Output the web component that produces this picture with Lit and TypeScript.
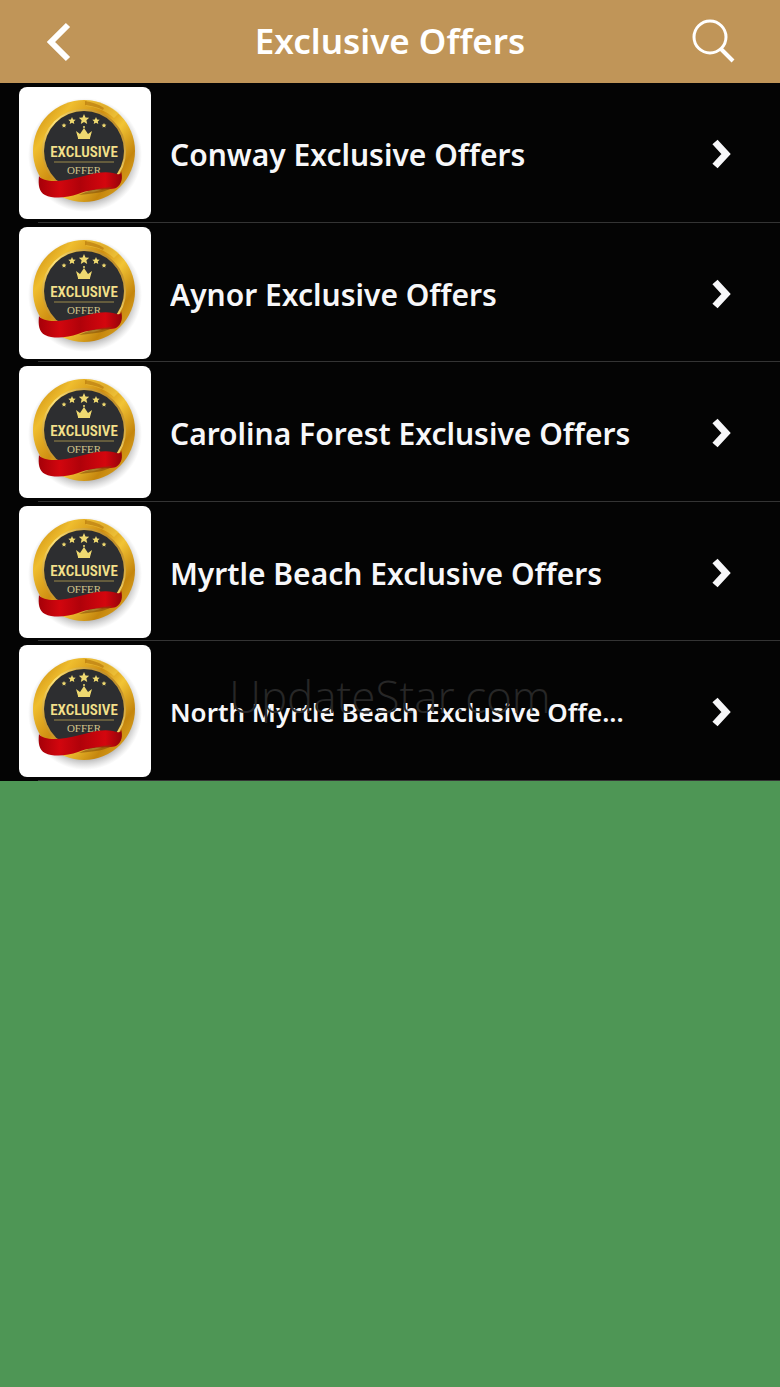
import { LitElement, html, css } from "lit";
import { customElement, property } from "lit/decorators.js";

@customElement("offer-badge")
class OfferBadge extends LitElement {
  static styles = css`
    :host {
      display: block;
      width: 132px;
      height: 132px;
      border-radius: 8px;
      background: #fff;
      overflow: hidden;
    }
    svg {
      display: block;
      width: 100%;
      height: 100%;
    }
    .word {
      font: 600 15px "Liberation Sans Narrow", "Roboto Condensed", "DejaVu Sans Condensed", sans-serif;
    }
    .sub {
      font: 400 11px "Liberation Serif", serif;
    }
  `;

  render() {
    return html`
      <svg viewBox="0 0 132 132" role="img" aria-label="Exclusive offer">
        <defs>
          <linearGradient id="gold" x1="0" y1="0.1" x2="1" y2="0.9">
            <stop offset="0" stop-color="#c98a10" />
            <stop offset="0.2" stop-color="#efbd2e" />
            <stop offset="0.42" stop-color="#cf8f12" />
            <stop offset="0.6" stop-color="#f2c435" />
            <stop offset="0.8" stop-color="#c5860d" />
            <stop offset="1" stop-color="#e3ad27" />
          </linearGradient>
          <linearGradient id="rim" x1="1" y1="0" x2="0" y2="1">
            <stop offset="0" stop-color="#a96c08" />
            <stop offset="0.5" stop-color="#fbe27a" />
            <stop offset="1" stop-color="#b5780a" />
          </linearGradient>
          <linearGradient id="red" x1="0" y1="0" x2="1" y2="0">
            <stop offset="0" stop-color="#a50008" />
            <stop offset="0.25" stop-color="#d2060e" />
            <stop offset="0.5" stop-color="#b0020a" />
            <stop offset="0.8" stop-color="#d4060e" />
            <stop offset="1" stop-color="#94040a" />
          </linearGradient>
          <radialGradient id="shade">
            <stop offset="0.8" stop-color="#777" stop-opacity="0.55" />
            <stop offset="1" stop-color="#999" stop-opacity="0" />
          </radialGradient>
        </defs>
        <circle cx="66" cy="68" r="57" fill="url(#shade)" />
        <circle cx="65" cy="64" r="51" fill="url(#gold)" />
        <path d="M68 13c13 1 24 6 32 13l-5 5c-8-7-17-11-28-12z" fill="#f9d94f" opacity="0.4" />
        <path d="M66 14c7 1 13 3 19 7l-1 2c-6-3-12-4-18-5z" fill="#b27208" opacity="0.6" />
        <circle cx="65" cy="64" r="41" fill="none" stroke="url(#rim)" stroke-width="2" />
        <circle cx="65" cy="64" r="40" fill="#2d2e30" />
        <g fill="#efd970">
          <path d="M65 27l1.500 3.400 3.700.4-2.800 2.500.8 3.600-3.200-1.900-3.200 1.900.8-3.600-2.800-2.500 3.700-.4z" />
          <path d="M53 30l1.100 2.400 2.600.3-1.900 1.700.5 2.600-2.300-1.300-2.300 1.300.5-2.600-1.900-1.700 2.600-.3z" />
          <path d="M77 30l1.100 2.400 2.600.3-1.900 1.700.5 2.600-2.300-1.300-2.300 1.300.5-2.600-1.900-1.700 2.600-.3z" />
          <path d="M45 36l.7 1.600 1.700.2-1.300 1.100.4 1.700-1.500-.9-1.500.9.4-1.700-1.300-1.100 1.700-.2z" />
          <path d="M85 36l.7 1.600 1.700.2-1.300 1.100.4 1.700-1.500-.9-1.500.9.4-1.700-1.300-1.100 1.700-.2z" />
          <circle cx="65" cy="40" r="1" />
          <path d="M57 44l4 3 4-6 4 6 4-3-2 7H59z" />
          <rect x="59" y="50" width="12" height="2" />
        </g>
        <text class="word" x="65" y="70" text-anchor="middle" fill="#f3e08a">EXCLUSIVE</text>
        <path d="M35 75h60" stroke="#9d8a4a" />
        <text class="sub" x="65" y="87" text-anchor="middle" fill="#d3c48c">OFFER</text>
        <path
          d="M20 89c3 5 14 6 27 4 18-3 33-10 47-7 5 1 8 3 8-2 2 7 1 13-5 17-9 3-20-1-38 6-11 4-25 5-33 1-6-3-7-10-6-19z"
          fill="url(#red)"
        />
        <path d="M92 100c-9 1-20 2-32 8l9-1c11-1 20-3 24-7z" fill="#7b4b08" opacity="0.55" />
      </svg>
    `;
  }
}

@customElement("offer-row")
class OfferRow extends LitElement {
  @property() label = "";
  @property({ type: Boolean }) long = false;

  static styles = css`
    :host {
      display: block;
    }
    .row {
      box-sizing: border-box;
      height: 100%;
      display: flex;
      align-items: flex-start;
      gap: 19px;
      padding: 4px 47px 0 19px;
      color: #f7f7f9;
      text-decoration: none;
      background: linear-gradient(#343434, #343434) 38px 100% / 100% 1px no-repeat;
    }
    .thumb {
      flex: none;
    }
    .label {
      flex: 1;
      min-width: 0;
      overflow: hidden;
      white-space: nowrap;
      font-size: 30px;
      font-weight: 600;
      line-height: 135px;
    }
    .long {
      font-size: 26px;
    }
    .chevron {
      flex: none;
      width: 22px;
      height: 132px;
    }
  `;

  render() {
    return html`
      <a class="row" href="#">
        <offer-badge class="thumb"></offer-badge>
        <span class="label ${this.long ? "long" : ""}">${this.label}</span>
        <svg class="chevron" viewBox="0 0 22 132" aria-hidden="true">
          <path d="M4 55l11 12-11 12" fill="none" stroke="#f7f7f9" stroke-width="7" />
        </svg>
      </a>
    `;
  }
}

@customElement("app-root")
class AppRoot extends LitElement {
  private offers = [
    "Conway Exclusive Offers",
    "Aynor Exclusive Offers",
    "Carolina Forest Exclusive Offers",
    "Myrtle Beach Exclusive Offers",
    "North Myrtle Beach Exclusive Offe...",
  ];

  static styles = css`
    :host {
      display: block;
      position: relative;
      min-height: 100vh;
      background: #4e9655;
      font-family: "Noto Sans", sans-serif;
    }
    .bar {
      box-sizing: border-box;
      height: 83px;
      display: flex;
      align-items: center;
      justify-content: space-between;
      padding: 0 42px;
      background: #c09558;
      color: #fff;
    }
    .title {
      margin: 0;
      padding-bottom: 2px;
      font-size: 35px;
      font-weight: 600;
      line-height: 48px;
    }
    .icon {
      width: 50px;
      height: 50px;
      padding: 0;
      border: 0;
      background: none;
      color: inherit;
    }
    .icon svg {
      display: block;
    }
    .list {
      display: grid;
      grid-auto-rows: 1fr;
      min-height: 698px;
      background: #040404;
    }
    .mark {
      position: absolute;
      top: 670px;
      left: 0;
      right: 0;
      text-align: center;
      font: 300 44px/52px "Open Sans", sans-serif;
      color: #272727;
      pointer-events: none;
    }
  `;

  render() {
    return html`
      <header class="bar">
        <button class="icon" aria-label="Back">
          <svg width="50" height="50" viewBox="0 0 50 50" fill="none" stroke="currentColor">
            <path d="M26 8L9 25l17 17" stroke-width="6" />
          </svg>
        </button>
        <h1 class="title">Exclusive Offers</h1>
        <button class="icon" aria-label="Search">
          <svg width="50" height="50" viewBox="0 0 50 50" fill="none" stroke="currentColor">
            <circle cx="22" cy="20" r="16" stroke-width="3" />
            <path d="M33 32l12 12" stroke-width="4" />
          </svg>
        </button>
      </header>
      <main class="list">
        ${this.offers.map(
          (label) => html`<offer-row .label=${label} .long=${label.length > 34}></offer-row>`
        )}
      </main>
      <div class="mark">UpdateStar.com</div>
    `;
  }
}
